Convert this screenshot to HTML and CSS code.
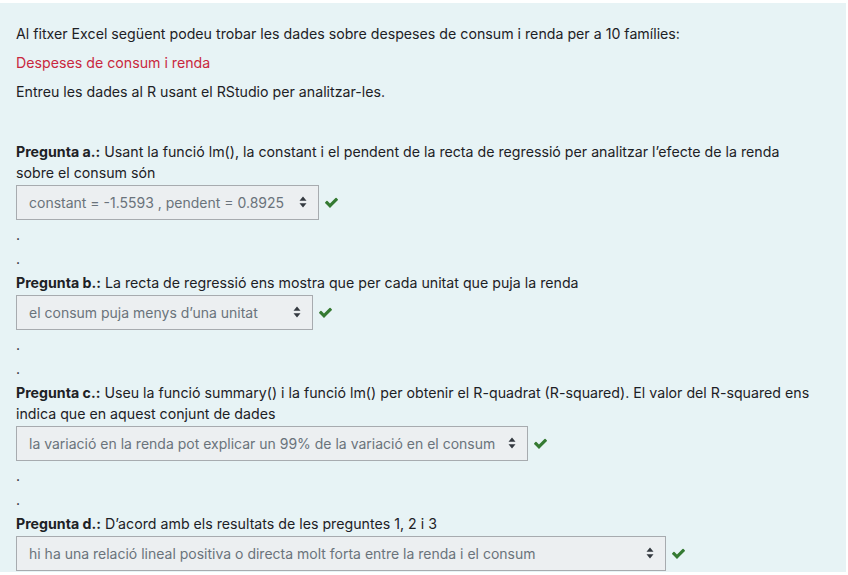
FILE: index.html
```html
<!DOCTYPE html>
<html lang="ca">
<head>
<meta charset="utf-8">
<title>Despeses de consum i renda</title>
<link rel="stylesheet" href="styles.css">
</head>
<body>
<div class="page">
  <p class="para">Al fitxer Excel següent podeu trobar les dades sobre despeses de consum i renda per a 10 famílies:</p>
  <p class="para"><a class="link" href="#">Despeses de consum i renda</a></p>
  <p class="para">Entreu les dades al R usant el RStudio per analitzar-les.</p>

  <div class="questions">
    <p class="line"><strong class="label">Pregunta a.:</strong> Usant la funció lm(), la constant i el pendent de la recta de regressió per analitzar l’efecte de la renda sobre el consum són</p>
    <div class="answer">
      <span class="select sel-a"><span class="val">constant = -1.5593 , pendent = 0.8925</span><svg class="arrows" viewBox="0 0 8 12"><path d="M4 0.5 L7.5 4.8 H0.5 Z M4 11.5 L7.5 7.2 H0.5 Z"/></svg></span>
      <svg class="check" viewBox="0 0 1792 1792"><path d="M1671 566q0 40-28 68l-724 724-136 136q-28 28-68 28t-68-28l-136-136-362-362q-28-28-28-68t28-68l136-136q28-28 68-28t68 28l294 295 656-657q28-28 68-28t68 28l136 136q28 28 28 68z"/></svg>
    </div>
    <p class="line">.</p>
    <p class="line">.</p>

    <p class="line"><strong class="label">Pregunta b.:</strong> La recta de regressió ens mostra que per cada unitat que puja la renda</p>
    <div class="answer">
      <span class="select sel-b"><span class="val">el consum puja menys d’una unitat</span><svg class="arrows" viewBox="0 0 8 12"><path d="M4 0.5 L7.5 4.8 H0.5 Z M4 11.5 L7.5 7.2 H0.5 Z"/></svg></span>
      <svg class="check" viewBox="0 0 1792 1792"><path d="M1671 566q0 40-28 68l-724 724-136 136q-28 28-68 28t-68-28l-136-136-362-362q-28-28-28-68t28-68l136-136q28-28 68-28t68 28l294 295 656-657q28-28 68-28t68 28l136 136q28 28 28 68z"/></svg>
    </div>
    <p class="line">.</p>
    <p class="line">.</p>

    <p class="line"><strong class="label">Pregunta c.:</strong> Useu la funció summary() i la funció lm() per obtenir el R-quadrat (R-squared). El valor del R-squared ens indica que en aquest conjunt de dades</p>
    <div class="answer">
      <span class="select sel-c"><span class="val">la variació en la renda pot explicar un 99% de la variació en el consum</span><svg class="arrows" viewBox="0 0 8 12"><path d="M4 0.5 L7.5 4.8 H0.5 Z M4 11.5 L7.5 7.2 H0.5 Z"/></svg></span>
      <svg class="check" viewBox="0 0 1792 1792"><path d="M1671 566q0 40-28 68l-724 724-136 136q-28 28-68 28t-68-28l-136-136-362-362q-28-28-28-68t28-68l136-136q28-28 68-28t68 28l294 295 656-657q28-28 68-28t68 28l136 136q28 28 28 68z"/></svg>
    </div>
    <p class="line">.</p>
    <p class="line">.</p>

    <p class="line"><strong class="label">Pregunta d.:</strong> D’acord amb els resultats de les preguntes 1, 2 i 3</p>
    <div class="answer">
      <span class="select sel-d"><span class="val">hi ha una relació lineal positiva o directa molt forta entre la renda i el consum</span><svg class="arrows" viewBox="0 0 8 12"><path d="M4 0.5 L7.5 4.8 H0.5 Z M4 11.5 L7.5 7.2 H0.5 Z"/></svg></span>
      <svg class="check" viewBox="0 0 1792 1792"><path d="M1671 566q0 40-28 68l-724 724-136 136q-28 28-68 28t-68-28l-136-136-362-362q-28-28-28-68t28-68l136-136q28-28 68-28t68 28l294 295 656-657q28-28 68-28t68 28l136 136q28 28 28 68z"/></svg>
    </div>
  </div>
</div>
</body>
</html>
```

FILE: styles.css
```css
html, body {
  margin: 0;
  padding: 0;
  background: #ffffff;
}

body {
  font-family: Inter, Roboto, "Liberation Sans", Arial, sans-serif;
  font-size: 14.2px;
  line-height: 21px;
  color: #1d2125;
  height: 575px;
  overflow: hidden;
}

.page {
  margin: 3px 2px 0 0;
  padding: 19.5px 32px 0 16px;
  background: #e7f3f5;
}

.para {
  margin: 0 0 8px 0;
}

.link {
  color: #c9283e;
  text-decoration: none;
}

.questions {
  display: flex;
  flex-direction: column;
  gap: 3px;
  margin-top: 39px;
}

.line {
  margin: 0;
}

.label {
  font-weight: 700;
}

.answer {
  display: flex;
  align-items: center;
  gap: 5px;
  margin: -1px 0 1px 0;
}

.select {
  box-sizing: border-box;
  height: 35px;
  display: inline-flex;
  align-items: center;
  justify-content: space-between;
  gap: 4px;
  padding: 0 11px 0 12px;
  background: #eceff1;
  border: 1px solid #a7abaf;
  color: #6a737b;
  font-size: 14px;
  white-space: nowrap;
}

.val {
  flex: none;
}

.sel-a { width: 303px; }
.sel-b { width: 297px; }
.sel-c { width: 512px; }
.sel-d { width: 650px; }

.arrows {
  width: 8px;
  height: 12px;
  fill: #343a40;
  flex: none;
}

.check {
  width: 15px;
  height: 15px;
  fill: #357a32;
  flex: none;
}
```
